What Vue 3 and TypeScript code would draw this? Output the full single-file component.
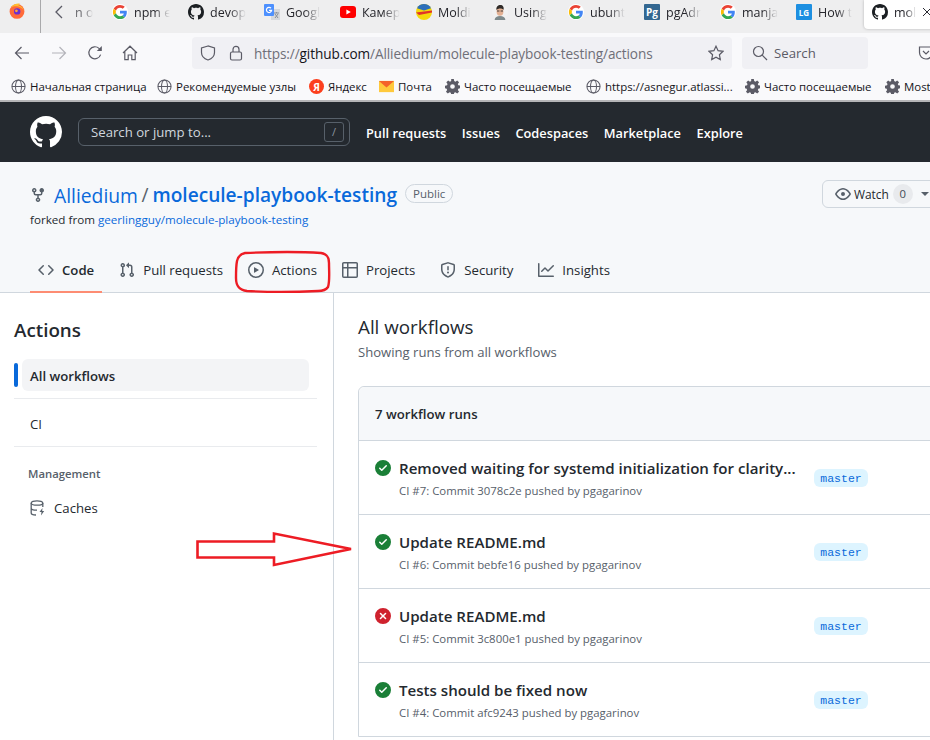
<template>
  <div class="page">
    <!-- browser chrome -->
    <div class="tabstrip">
      <div class="ff-cell">
        <svg class="fav" viewBox="0 0 16 16">
          <circle cx="8" cy="8.400" r="7.400" fill="#ff6a3a" />
          <path d="M2 4.500C4 1 8 .2 11 .6c-1 .6-1.400 1.200-1.500 1.800 2.600.4 5 2.600 5.400 5.400C13.400 3.600 6 1.800 2 4.500z" fill="#ffbd2e" />
          <circle cx="8.200" cy="8.400" r="3.200" fill="#6b2fd0" />
          <circle cx="7.400" cy="7.800" r="1.400" fill="#ffa436" />
        </svg>
      </div>
      <div class="scroll-cell">
        <svg class="chevron" viewBox="0 0 16 16"><path d="M11 2 5 8l6 6" /></svg>
        <span class="tab-text">n o</span>
      </div>
      <div v-for="tab in tabs" :key="tab.label + tab.icon" class="tab">
        <svg v-if="tab.icon === 'google'" class="fav" viewBox="-3 -3 54 54">
          <circle cx="24" cy="24" r="27" fill="#fff" />
          <path d="M24 9.500c3.540 0 6.710 1.220 9.210 3.600l6.850-6.850C35.900 2.380 30.470 0 24 0 14.620 0 6.510 5.380 2.560 13.220l7.980 6.190C12.430 13.720 17.740 9.500 24 9.500z" fill="#ea4335" />
          <path d="M46.980 24.550c0-1.570-.15-3.090-.38-4.550H24v9.020h12.940c-.58 2.960-2.260 5.480-4.780 7.180l7.730 6c4.510-4.180 7.090-10.360 7.090-17.650z" fill="#4285f4" />
          <path d="M10.530 28.590c-.48-1.450-.76-2.990-.76-4.590s.27-3.140.76-4.590l-7.980-6.190C.92 16.460 0 20.120 0 24c0 3.880.92 7.540 2.560 10.780l7.970-6.190z" fill="#fbbc05" />
          <path d="M24 48c6.480 0 11.930-2.130 16.020-5.810l-7.730-6c-2.150 1.450-4.920 2.300-8.290 2.300-6.260 0-11.570-4.220-13.460-9.910l-7.980 6.190C6.510 42.620 14.620 48 24 48z" fill="#34a853" />
        </svg>
        <svg v-else-if="tab.icon === 'github'" class="fav" viewBox="0 0 16 16"><path :d="octicons.github" fill="#1b1f23" /></svg>
        <svg v-else-if="tab.icon === 'translate'" class="fav" viewBox="0 0 16 16">
          <rect x="7" y="5" width="9" height="11" fill="#d5d8dc" />
          <path d="M10 9h5M12.500 8v1M11 14l3-4M11 10l3 4" stroke="#8a9099" stroke-width="1" fill="none" />
          <rect x="0" y="0" width="10" height="12" rx="1" fill="#4d90fe" />
          <path d="M7 4.200A2.600 2.600 0 1 0 7.600 6.400H5" stroke="#fff" stroke-width="1.200" fill="none" />
        </svg>
        <svg v-else-if="tab.icon === 'youtube'" class="fav" viewBox="0 0 16 16">
          <rect x="0" y="2" width="16" height="12" rx="3" fill="#f00" />
          <path d="M6.400 5.400v5.200L10.800 8z" fill="#fff" />
        </svg>
        <svg v-else-if="tab.icon === 'mold'" class="fav" viewBox="0 0 16 16">
          <circle cx="8" cy="8" r="8" fill="#f5d90a" />
          <path d="M1 4.200A8 8 0 0 1 15 4.200L8 6.400z" fill="#2c6fbb" />
          <path d="M0 8.400 16 6.400v2.200L3 11z" fill="#e0332a" />
        </svg>
        <svg v-else-if="tab.icon === 'person'" class="fav" viewBox="0 0 16 16">
          <circle cx="8" cy="8" r="8" fill="#f1f1f1" />
          <path d="M2.600 16c.4-3 2.400-4 5.400-4s5 1 5.400 4z" fill="#7e8a8c" />
          <ellipse cx="8" cy="7.400" rx="3.400" ry="4.400" fill="#e3b093" />
          <path d="M4.400 6C4 2.600 6 1 8.400 1s3.800 2 3.200 5C10.600 4 6 4 4.400 6z" fill="#2f2a28" />
          <path d="M5 7h2.400M8.600 7H11" stroke="#333" stroke-width=".9" />
        </svg>
        <span v-else-if="tab.icon === 'pg'" class="fav square pg">Pg</span>
        <span v-else-if="tab.icon === 'lg'" class="fav square lg">LG</span>
        <span class="tab-text">{{ tab.label }}</span>
      </div>
      <div class="tab active">
        <svg class="fav" viewBox="0 0 16 16"><path :d="octicons.github" fill="#1b1f23" /></svg>
        <span class="tab-text">mol</span>
        <svg class="tab-close" viewBox="0 0 10 10"><path d="m1 1 8 8M9 1 1 9" /></svg>
      </div>
    </div>

    <div class="toolbar">
      <svg class="tool back" viewBox="0 0 16 16"><path d="M15 8H1.500M7.500 2l-6 6 6 6" /></svg>
      <svg class="tool forward" viewBox="0 0 16 16"><path d="M1 8h13.500M8.500 2l6 6-6 6" /></svg>
      <svg class="tool reload" viewBox="0 0 16 16"><path d="M13.600 9.600A6 6 0 1 1 12 3.400l1.600 1.400" /><path class="solid" d="M14.800 1v5h-5z" /></svg>
      <svg class="tool home" viewBox="0 0 16 16"><path d="M1 8 8 1.200 15 8M2.800 6.600V14.600h3.400V10h3.600v4.600h3.400V6.600" /></svg>
      <div class="urlbar">
        <svg class="tool" viewBox="0 0 16 16"><path d="M8 1 1.500 3v4.400C1.500 11 4 13.600 8 15c4-1.400 6.500-4 6.500-7.600V3z" /></svg>
        <svg class="tool lock" viewBox="0 0 16 16"><rect x="2.500" y="7" width="11" height="8" rx="1.500" /><path d="M5 7V4.400a3 3 0 0 1 6 0V7" /></svg>
        <span class="url"><span class="faint">https://</span>github.com<span class="faint">/Alliedium/molecule-playbook-testing/actions</span></span>
        <svg class="tool star" viewBox="0 0 16 16"><path d="m8 1.200 2.100 4.500 4.900.6-3.600 3.400.9 4.900L8 12.200l-4.300 2.400.9-4.900L1 6.300l4.900-.6z" /></svg>
      </div>
      <div class="searchbar">
        <svg class="tool" viewBox="0 0 16 16"><circle cx="6.500" cy="6.500" r="5" /><path d="m10.200 10.200 4.800 4.800" /></svg>
        <span>Search</span>
      </div>
      <svg class="tool pocket" viewBox="0 0 16 16"><path d="M1.500 2h13v5.500a6.500 6.500 0 0 1-13 0z" /><path d="m5 6 3 3 3-3" /></svg>
    </div>

    <div class="bookmarks">
      <div v-for="mark in bookmarks" :key="mark.label + mark.width" class="bookmark" :style="{ width: mark.width + 'px' }">
        <svg v-if="mark.icon === 'globe'" class="mark-icon line" viewBox="0 0 16 16">
          <circle cx="8" cy="8" r="7" /><ellipse cx="8" cy="8" rx="3.200" ry="7" /><path d="M1 8h14" />
        </svg>
        <svg v-else-if="mark.icon === 'gear'" class="mark-icon" viewBox="0 0 16 16">
          <path fill-rule="evenodd" d="M6.600 0h2.800l.4 2.200 1.300.6L13 1.500l2 2-1.300 1.900.5 1.300 2.300.4v2.800l-2.300.4-.5 1.300 1.300 1.900-2 2-1.900-1.300-1.300.5-.4 2.200H6.600l-.4-2.200-1.300-.5L3 15.500l-2-2 1.300-1.900-.5-1.300L-.1 9.900V7.100l2.300-.4.5-1.300L1.400 3.500l2-2 1.900 1.300 1.300-.6zM8 5.500a2.500 2.500 0 1 0 0 5 2.500 2.500 0 0 0 0-5z" fill="#5b5b66" />
        </svg>
        <span v-else-if="mark.icon === 'yandex'" class="mark-icon ya">Я</span>
        <svg v-else class="mark-icon" viewBox="0 0 16 16">
          <rect x="0" y="2" width="16" height="12" fill="#ffc93c" />
          <path d="M0 2h16L8 9z" fill="#f4622a" />
        </svg>
        <span class="mark-label">{{ mark.label }}</span>
      </div>
    </div>

    <!-- github nav -->
    <header class="gh-header">
      <svg class="gh-logo" viewBox="0 0 16 16"><path :d="octicons.github" /></svg>
      <div class="gh-search">
        <span>Search or jump to...</span>
        <span class="slash">/</span>
      </div>
      <nav class="gh-nav">
        <a v-for="item in navItems" :key="item">{{ item }}</a>
      </nav>
    </header>

    <section class="repo-head">
      <div class="repo-top">
        <div class="repo-title-block">
          <div class="repo-title">
            <svg class="octicon" viewBox="0 0 16 16"><path :d="octicons.forked" /></svg>
            <a class="owner">Alliedium</a>
            <span class="sep">/</span>
            <a class="name">molecule-playbook-testing</a>
            <span class="public">Public</span>
          </div>
          <div class="forked">forked from <a>geerlingguy/molecule-playbook-testing</a></div>
        </div>
        <div class="watch">
          <svg class="octicon" viewBox="0 0 16 16"><path :d="octicons.eye" /></svg>
          <span>Watch</span>
          <span class="counter">0</span>
          <span class="caret"></span>
        </div>
      </div>
      <nav class="repo-tabs">
        <a v-for="tab in repoTabs" :key="tab.label" class="repo-tab" :class="{ selected: tab.selected }">
          <svg class="octicon" viewBox="0 0 16 16"><path :d="octicons[tab.icon]" fill-rule="evenodd" /></svg>
          <span>{{ tab.label }}</span>
        </a>
      </nav>
    </section>

    <div class="content">
      <aside class="sidebar">
        <h2>Actions</h2>
        <div class="side-current">
          <span class="side-marker"></span>
          <span class="side-pill">All workflows</span>
        </div>
        <div class="side-rule"></div>
        <div class="side-link">CI</div>
        <div class="side-rule"></div>
        <div class="side-title">Management</div>
        <div class="side-cache">
          <svg class="cache-icon" viewBox="0 0 16 16">
            <ellipse cx="7" cy="3" rx="5.800" ry="2.200" />
            <path d="M1.200 3v10c0 1.200 2.200 2 4.800 2M12.800 3v4M1.200 8c0 1.200 2.600 2.200 5.800 2.200" />
            <path class="bolt" d="M12.500 8 9.500 12h2l-.5 3.500 3.200-4.500h-2z" />
          </svg>
          <span>Caches</span>
        </div>
      </aside>

      <main class="main">
        <h1>All workflows</h1>
        <p class="subtitle">Showing runs from all workflows</p>
        <div class="runs">
          <div class="runs-head">7 workflow runs</div>
          <div v-for="run in runs" :key="run.sub" class="run">
            <svg class="status" :class="{ failed: run.failed }" viewBox="0 0 16 16">
              <path :d="run.failed ? octicons.fail : octicons.ok" fill-rule="evenodd" />
            </svg>
            <div class="run-text">
              <div class="run-title">{{ run.title }}</div>
              <div class="run-sub">{{ run.sub }}</div>
            </div>
            <span class="branch">master</span>
          </div>
        </div>
      </main>
    </div>

    <!-- hand-drawn annotations over the screenshot -->
    <svg class="marks" viewBox="0 0 930 740">
      <path class="ring" d="M245 253C270 252 305 252 321 253c6 1 8 4 8 10 0 9 1 18-1 24-2 3-5 4-10 4-22 1-52 1-71 0-8-1-11-5-11-13 0-6 0-12 1-17 1-4 3-7 8-8z" />
      <path d="M197.500 541.500H274V533.500L351 549 274 565V557.500H197.500z" />
    </svg>
  </div>
</template>

<script setup lang="ts">
interface Tab {
  icon: string
  label: string
}

interface Bookmark {
  icon: string
  label: string
  width: number
}

interface Run {
  title: string
  sub: string
  failed?: boolean
}

const octicons: Record<string, string> = {
  github: 'M8 0C3.58 0 0 3.58 0 8c0 3.54 2.29 6.53 5.47 7.59.4.07.55-.17.55-.38 0-.19-.01-.82-.01-1.49-2.01.37-2.53-.49-2.69-.94-.09-.23-.48-.94-.82-1.13-.28-.15-.68-.52-.01-.53.63-.01 1.08.58 1.23.82.72 1.21 1.87.87 2.33.66.07-.52.28-.87.51-1.07-1.78-.2-3.64-.89-3.64-3.95 0-.87.31-1.59.82-2.15-.08-.2-.36-1.02.08-2.12 0 0 .67-.21 2.2.82.64-.18 1.32-.27 2-.27.68 0 1.36.09 2 .27 1.53-1.04 2.2-.82 2.2-.82.44 1.1.16 1.92.08 2.12.51.56.82 1.27.82 2.15 0 3.07-1.87 3.75-3.65 3.95.29.25.54.73.54 1.48 0 1.07-.01 1.93-.01 2.2 0 .21.15.46.55.38A8.013 8.013 0 0016 8c0-4.42-3.58-8-8-8z',
  forked: 'M5 3.25a.75.75 0 11-1.5 0 .75.75 0 011.5 0zm0 2.122a2.25 2.25 0 10-1.5 0v.878A2.25 2.25 0 005.75 8.5h1.5v2.128a2.251 2.251 0 101.5 0V8.5h1.5a2.25 2.25 0 002.25-2.25v-.878a2.25 2.25 0 10-1.5 0v.878a.75.75 0 01-.75.75h-4.5A.75.75 0 015 6.25v-.878zm3.75 7.378a.75.75 0 11-1.5 0 .75.75 0 011.5 0zm3-8.75a.75.75 0 100-1.5.75.75 0 000 1.5z',
  code: 'M4.72 3.22a.75.75 0 011.06 1.06L2.06 8l3.72 3.72a.75.75 0 11-1.06 1.06L.47 8.53a.75.75 0 010-1.06l4.25-4.25zm6.56 0a.75.75 0 10-1.06 1.06L13.94 8l-3.72 3.72a.75.75 0 101.06 1.06l4.25-4.25a.75.75 0 000-1.06l-4.25-4.25z',
  pull: 'M7.177 3.073L9.573.677A.25.25 0 0110 .854v4.792a.25.25 0 01-.427.177L7.177 3.427a.25.25 0 010-.354zM3.75 2.5a.75.75 0 100 1.5.75.75 0 000-1.5zm-2.25.75a2.25 2.25 0 113 2.122v5.256a2.251 2.251 0 11-1.5 0V5.372A2.25 2.25 0 011.5 3.25zM11 2.5h-1V4h1a1 1 0 011 1v5.628a2.251 2.251 0 101.5 0V5A2.5 2.5 0 0011 2.5zm1 10.25a.75.75 0 111.5 0 .75.75 0 01-1.5 0zM3.75 12a.75.75 0 100 1.5.75.75 0 000-1.5z',
  play: 'M1.5 8a6.5 6.5 0 1113 0 6.5 6.5 0 01-13 0zM8 0a8 8 0 100 16A8 8 0 008 0zM6.379 5.227A.25.25 0 006 5.442v5.117a.25.25 0 00.379.214l4.264-2.559a.25.25 0 000-.428L6.379 5.227z',
  table: 'M0 1.75C0 .784.784 0 1.75 0h12.5C15.216 0 16 .784 16 1.750v12.500A1.750 1.750 0 0114.250 16H1.750A1.750 1.750 0 010 14.250V1.750zM1.500 6.500v7.750c0 .138.112.250.250.250H5v-8H1.500zM5 5H1.500V1.750a.25.25 0 01.25-.25H5V5zm1.500 1.500v8h7.750a.25.25 0 00.25-.25V6.500h-8zm8-1.500h-8V1.500h7.750a.25.25 0 01.25.25V5z',
  shield: 'M7.467.133a1.75 1.75 0 011.066 0l5.25 1.68A1.75 1.75 0 0115 3.48V7c0 1.566-.32 3.182-1.303 4.682-.983 1.498-2.585 2.813-5.032 3.855a1.7 1.7 0 01-1.33 0c-2.447-1.042-4.049-2.357-5.032-3.855C1.32 10.182 1 8.566 1 7V3.48a1.75 1.75 0 011.217-1.667l5.25-1.68zm.61 1.429a.25.25 0 00-.153 0l-5.25 1.68a.25.25 0 00-.174.238V7c0 1.358.275 2.666 1.057 3.86.784 1.194 2.121 2.34 4.366 3.297a.2.2 0 00.154 0c2.245-.956 3.582-2.104 4.366-3.298C13.225 9.666 13.5 8.36 13.5 7V3.48a.25.25 0 00-.174-.237l-5.25-1.68zM9 10.5a1 1 0 11-2 0 1 1 0 012 0zm-.25-5.75a.75.75 0 10-1.5 0v3a.75.75 0 001.5 0v-3z',
  graph: 'M1.5 1.75a.75.75 0 00-1.5 0v12.5c0 .414.336.75.75.75h14.5a.75.75 0 000-1.5H1.5V1.75zm14.28 2.53a.75.75 0 00-1.06-1.06L10 7.94 7.53 5.47a.75.75 0 00-1.06 0L3.22 8.72a.75.75 0 001.06 1.06L7 7.06l2.47 2.47a.75.75 0 001.06 0l5.25-5.25z',
  eye: 'M1.679 7.932c.412-.621 1.242-1.75 2.366-2.717C5.175 4.242 6.527 3.5 8 3.5c1.473 0 2.824.742 3.955 1.715 1.124.967 1.954 2.096 2.366 2.717a.119.119 0 010 .136c-.412.621-1.242 1.75-2.366 2.717C10.825 11.758 9.473 12.5 8 12.5c-1.473 0-2.824-.742-3.955-1.715C2.92 9.818 2.09 8.69 1.679 8.068a.119.119 0 010-.136zM8 2c-1.981 0-3.67.992-4.933 2.078C1.797 5.169.88 6.423.43 7.1a1.619 1.619 0 000 1.798c.45.678 1.367 1.932 2.637 3.024C4.329 13.008 6.019 14 8 14c1.981 0 3.67-.992 4.933-2.078 1.27-1.091 2.187-2.345 2.637-3.023a1.619 1.619 0 000-1.798c-.45-.678-1.367-1.932-2.637-3.023C11.671 2.992 9.981 2 8 2zm0 8a2 2 0 100-4 2 2 0 000 4z',
  ok: 'M8 16A8 8 0 108 0a8 8 0 000 16zm3.78-9.72a.75.75 0 00-1.06-1.06L6.75 9.19 5.28 7.72a.75.75 0 00-1.06 1.06l2 2a.75.75 0 001.06 0l4.5-4.5z',
  fail: 'M2.343 13.657A8 8 0 1113.657 2.343 8 8 0 012.343 13.657zM6.03 4.97a.75.75 0 00-1.06 1.06L6.94 8 4.97 9.97a.75.75 0 101.06 1.06L8 9.06l1.97 1.97a.75.75 0 101.06-1.06L9.06 8l1.97-1.97a.75.75 0 10-1.06-1.06L8 6.94 6.03 4.97z'
}

const tabs: Tab[] = [
  { icon: 'google', label: 'npm є' },
  { icon: 'github', label: 'devop' },
  { icon: 'translate', label: 'Googl' },
  { icon: 'youtube', label: 'Камер' },
  { icon: 'mold', label: 'Moldi' },
  { icon: 'person', label: 'Using' },
  { icon: 'google', label: 'ubunt' },
  { icon: 'pg', label: 'pgAdr' },
  { icon: 'google', label: 'manja' },
  { icon: 'lg', label: 'How t' }
]

const bookmarks: Bookmark[] = [
  { icon: 'globe', label: 'Начальная страница', width: 146 },
  { icon: 'globe', label: 'Рекомендуемые узлы', width: 152 },
  { icon: 'yandex', label: 'Яндекс', width: 70 },
  { icon: 'mail', label: 'Почта', width: 66 },
  { icon: 'gear', label: 'Часто посещаемые', width: 141 },
  { icon: 'globe', label: 'https://asnegur.atlassi...', width: 159 },
  { icon: 'gear', label: 'Часто посещаемые', width: 140 },
  { icon: 'gear', label: 'Most', width: 60 }
]

const navItems = ['Pull requests', 'Issues', 'Codespaces', 'Marketplace', 'Explore']

const repoTabs = [
  { icon: 'code', label: 'Code', selected: true },
  { icon: 'pull', label: 'Pull requests' },
  { icon: 'play', label: 'Actions' },
  { icon: 'table', label: 'Projects' },
  { icon: 'shield', label: 'Security' },
  { icon: 'graph', label: 'Insights' }
]

const runs: Run[] = [
  { title: 'Removed waiting for systemd initialization for clarity...', sub: 'CI #7: Commit 3078c2e pushed by pgagarinov' },
  { title: 'Update README.md', sub: 'CI #6: Commit bebfe16 pushed by pgagarinov' },
  { title: 'Update README.md', sub: 'CI #5: Commit 3c800e1 pushed by pgagarinov', failed: true },
  { title: 'Tests should be fixed now', sub: 'CI #4: Commit afc9243 pushed by pgagarinov' }
]
</script>

<style>
html,
body {
  margin: 0;
  background: #fff;
  overflow: hidden;
}
</style>

<style scoped>
.page {
  position: relative;
  width: 930px;
  height: 740px;
  overflow: hidden;
  background: #fff;
  font-family: "Open Sans", "Noto Sans", sans-serif;
  font-size: 13.2px;
  color: #24292f;
}

.tabstrip {
  display: flex;
  align-items: flex-start;
  height: 33px;
  background: #eeeeef;
}

.fav {
  width: 16px;
  height: 16px;
  flex: none;
}

.ff-cell {
  display: flex;
  justify-content: center;
  flex: none;
  width: 41px;
  height: 33px;
  box-sizing: border-box;
  padding: 3px 6px 0 0;
  border-right: 1px solid #a9a9ab;
}

.scroll-cell {
  display: flex;
  align-items: center;
  flex: none;
  width: 71px;
  height: 24px;
  box-sizing: border-box;
  padding-left: 10px;
  gap: 8px;
}

.chevron {
  width: 16px;
  height: 16px;
  fill: none;
  stroke: #5b5b66;
  stroke-width: 1.3;
}

.tab {
  display: flex;
  align-items: center;
  gap: 6px;
  width: 76px;
  height: 24px;
  flex: none;
}

.tab-text {
  white-space: nowrap;
  font-size: 12.5px;
  color: #26262c;
  -webkit-mask-image: linear-gradient(to right, #000 55%, transparent 100%);
  mask-image: linear-gradient(to right, #000 55%, transparent 100%);
}

.scroll-cell .tab-text {
  color: #6b6b70;
}

.tab.active {
  position: absolute;
  top: 0;
  left: 864px;
  width: 80px;
  height: 29px;
  box-sizing: border-box;
  padding: 0 19px 5px 8px;
  background: #fff;
  border-radius: 0 0 4px 4px;
  box-shadow: 0 0 3px rgba(0, 0, 0, 0.25);
}

.tab-close {
  width: 10px;
  height: 10px;
  flex: none;
  margin-left: auto;
  fill: none;
  stroke: #2b2b33;
  stroke-width: 1;
}

.square {
  display: flex;
  align-items: center;
  justify-content: center;
  font-size: 10px;
  font-weight: 700;
  color: #fff;
  border-radius: 1px;
}

.pg {
  background: #336791;
}

.lg {
  background: #1d8fe1;
  font-size: 8px;
}

.toolbar {
  display: flex;
  align-items: center;
  height: 36px;
  padding: 4px 0 0 14px;
  box-sizing: border-box;
  background: #f9f9fb;
}

.tool {
  width: 16px;
  height: 16px;
  flex: none;
  fill: none;
  stroke: #5b5b66;
  stroke-width: 1.2;
}

.tool .solid {
  fill: #5b5b66;
  stroke: none;
}

.forward {
  margin-left: 21px;
  stroke: #b4b4ba;
}

.reload {
  margin-left: 20px;
}

.home {
  margin-left: 19px;
}

.urlbar {
  display: flex;
  align-items: center;
  flex: none;
  width: 540px;
  height: 32px;
  margin-left: 54px;
  padding: 0 8px;
  box-sizing: border-box;
  background: #f0f0f4;
  border-radius: 4px;
}

.lock {
  margin-left: 12px;
}

.url {
  margin-left: 10px;
  flex: 1;
  font-size: 13.6px;
  letter-spacing: -0.1px;
  color: #15141a;
  white-space: nowrap;
}

.faint {
  color: #6f6f78;
}

.searchbar {
  display: flex;
  align-items: center;
  flex: none;
  gap: 6px;
  width: 126px;
  height: 32px;
  margin-left: 10px;
  padding-left: 10px;
  box-sizing: border-box;
  background: #f0f0f4;
  border-radius: 4px;
  color: #5b5b66;
}

.pocket {
  margin-left: 50px;
}

.bookmarks {
  display: flex;
  align-items: center;
  height: 33px;
  padding: 4px 0 0 11px;
  box-sizing: border-box;
  background: #f9f9fb;
  border-bottom: 2px solid #b5b5b7;
}

.bookmark {
  display: flex;
  align-items: center;
  gap: 4px;
  flex: none;
  white-space: nowrap;
}

.mark-icon {
  width: 15px;
  height: 15px;
  flex: none;
}

.mark-icon.line {
  fill: none;
  stroke: #5b5b66;
  stroke-width: 1.1;
}

.mark-label {
  font-size: 11.45px;
  color: #15141a;
}

.ya {
  display: flex;
  align-items: center;
  justify-content: center;
  border-radius: 50%;
  background: #fc3f1d;
  color: #fff;
  font-size: 10px;
  font-weight: 700;
}

.gh-header {
  display: flex;
  align-items: center;
  height: 60px;
  padding-left: 30px;
  box-sizing: border-box;
  background: #24292f;
  color: #fff;
}

.gh-logo {
  width: 32px;
  height: 32px;
  fill: #fff;
}

.gh-search {
  display: flex;
  align-items: center;
  justify-content: space-between;
  width: 272px;
  height: 28px;
  margin-left: 16px;
  padding: 0 5px 0 12px;
  box-sizing: border-box;
  border: 1px solid #57606a;
  border-radius: 6px;
  color: #d0d7de;
}

.slash {
  width: 18px;
  height: 18px;
  line-height: 18px;
  text-align: center;
  border: 1px solid #57606a;
  border-radius: 3px;
  font-size: 11px;
  color: #8c959f;
}

.gh-nav {
  display: flex;
  gap: 15.5px;
  margin-left: 16px;
  padding-top: 1px;
  font-size: 12.8px;
  font-weight: 600;
  white-space: nowrap;
}

.repo-head {
  height: 131px;
  box-sizing: border-box;
  padding-top: 18px;
  background: #f6f8fa;
  border-bottom: 1px solid #d0d7de;
}

.repo-top {
  display: flex;
  justify-content: space-between;
  height: 72px;
  padding-left: 30px;
}

.repo-title {
  display: flex;
  align-items: center;
  height: 30px;
  font-size: 19.1px;
}

.octicon {
  width: 16px;
  height: 16px;
  flex: none;
  fill: #57606a;
}

.owner,
.name,
.forked a {
  color: #0969da;
}

.owner {
  margin-left: 8px;
  font-size: 19.3px;
}

.sep {
  margin: 0 4px 0 3.5px;
  color: #57606a;
}

.name {
  font-weight: 600;
}

.public {
  margin: -3px 0 0 8px;
  padding: 0 7px;
  border: 1px solid #d0d7de;
  border-radius: 10px;
  font-size: 11.5px;
  line-height: 17px;
  color: #57606a;
}

.forked {
  font-size: 11.65px;
  line-height: 18px;
  margin-top: 1px;
}

.watch {
  display: flex;
  align-items: center;
  gap: 3px;
  width: 120px;
  height: 28px;
  margin-right: -12px;
  padding-left: 12px;
  box-sizing: border-box;
  border: 1px solid #d0d7de;
  border-radius: 6px;
  background: #f6f8fa;
  font-size: 11.9px;
}

.counter {
  display: inline-block;
  width: 20px;
  height: 20px;
  margin-left: 1px;
  border-radius: 50%;
  background: #e8eaed;
  text-align: center;
  line-height: 20px;
  font-size: 11.3px;
  color: #444c56;
}

.caret {
  width: 0;
  height: 0;
  margin-left: 5px;
  border: 4px solid transparent;
  border-top-color: #57606a;
  border-bottom: 0;
}

.repo-tabs {
  display: flex;
  align-items: stretch;
  height: 40px;
  padding-left: 30px;
  gap: 9px;
  white-space: nowrap;
}

.repo-tab {
  display: flex;
  align-items: center;
  gap: 8px;
  padding: 0 8px 4px;
  margin-bottom: -1px;
  border-bottom: 2px solid transparent;
}

.repo-tab.selected {
  font-weight: 600;
  border-bottom-color: #fd8c73;
}

.content {
  display: flex;
  height: 447px;
}

.sidebar {
  width: 334px;
  flex: none;
  box-sizing: border-box;
  padding: 24px 16px 0 14px;
  border-right: 1px solid #d0d7de;
}

.sidebar h2 {
  margin: 0 0 16px;
  font-size: 18.8px;
  font-weight: 600;
  line-height: 26px;
}

.side-current {
  display: flex;
  align-items: center;
  gap: 4px;
  height: 32px;
  margin-right: 8px;
}

.side-marker {
  width: 4px;
  height: 24px;
  border-radius: 4px;
  background: #0969da;
}

.side-pill {
  flex: 1;
  height: 32px;
  line-height: 34px;
  padding-left: 8px;
  border-radius: 6px;
  background: #f3f4f6;
  font-weight: 600;
}

.side-rule {
  height: 1px;
  margin: 7px 0;
  background: #e9ebee;
}

.side-link {
  height: 32px;
  line-height: 36px;
  padding-left: 16px;
  margin: 7px 0 8px;
}

.side-title {
  margin-top: 9px;
  height: 36px;
  line-height: 36px;
  padding-left: 14px;
  font-size: 11.3px;
  font-weight: 600;
  color: #57606a;
}

.side-cache {
  display: flex;
  align-items: center;
  gap: 8px;
  height: 32px;
  padding-left: 16px;
}

.cache-icon {
  width: 16px;
  height: 16px;
  fill: none;
  stroke: #57606a;
  stroke-width: 1.3;
}

.cache-icon .bolt {
  fill: #57606a;
  stroke: none;
}

.main {
  flex: 1;
  min-width: 0;
  padding: 21px 0 0 24px;
}

.main h1 {
  margin: 0;
  font-size: 18.8px;
  font-weight: 400;
  line-height: 26px;
}

.subtitle {
  margin: 2px 0 0;
  font-size: 13.1px;
  line-height: 20px;
  color: #57606a;
}

.runs {
  width: 700px;
  margin-top: 24px;
  border: 1px solid #d0d7de;
  border-radius: 6px 0 0 0;
}

.runs-head {
  height: 53px;
  line-height: 55px;
  padding-left: 16px;
  background: #f6f8fa;
  font-weight: 600;
  border-radius: 6px 0 0 0;
}

.run {
  display: flex;
  align-items: flex-start;
  height: 74px;
  box-sizing: border-box;
  padding: 19px 0 0 16px;
  border-top: 1px solid #d0d7de;
}

.status {
  width: 16px;
  height: 16px;
  flex: none;
  fill: #1a7f37;
}

.status.failed {
  fill: #cf222e;
}

.run-text {
  width: 415px;
  margin-left: 8px;
  flex: none;
}

.run-title {
  font-size: 15.1px;
  font-weight: 600;
  line-height: 20px;
  margin-top: -2px;
  white-space: nowrap;
}

.run-sub {
  margin-top: 5px;
  font-size: 11.4px;
  line-height: 16px;
  color: #57606a;
}

.branch {
  width: 54px;
  height: 18px;
  margin-top: 9px;
  line-height: 19px;
  text-align: center;
  border-radius: 6px;
  background: #ddf4ff;
  color: #0969da;
  font-family: "Liberation Mono", "DejaVu Sans Mono", monospace;
  font-size: 11.5px;
}

.marks {
  position: absolute;
  inset: 0;
  width: 930px;
  height: 740px;
  pointer-events: none;
  fill: none;
  stroke: #ed1c24;
  stroke-width: 2.6;
}

.marks .ring {
  stroke-width: 2.4;
}
</style>
